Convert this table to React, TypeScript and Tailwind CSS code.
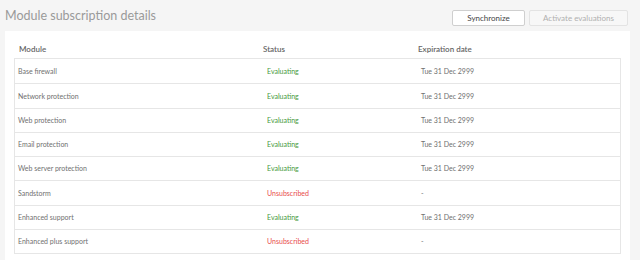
import React from "react";

const rows: { name: string; status: "Evaluating" | "Unsubscribed"; date: string }[] = [
  { name: "Base firewall", status: "Evaluating", date: "Tue 31 Dec 2999" },
  { name: "Network protection", status: "Evaluating", date: "Tue 31 Dec 2999" },
  { name: "Web protection", status: "Evaluating", date: "Tue 31 Dec 2999" },
  { name: "Email protection", status: "Evaluating", date: "Tue 31 Dec 2999" },
  { name: "Web server protection", status: "Evaluating", date: "Tue 31 Dec 2999" },
  { name: "Sandstorm", status: "Unsubscribed", date: "-" },
  { name: "Enhanced support", status: "Evaluating", date: "Tue 31 Dec 2999" },
  { name: "Enhanced plus support", status: "Unsubscribed", date: "-" },
];

export default function App() {
  return (
    <div
      className="w-[640px] h-[260px] overflow-hidden bg-[#f5f5f5] flex flex-col"
      style={{ fontFamily: "Lato, 'Open Sans', sans-serif" }}
    >
      <div className="h-[31px] flex items-start shrink-0">
        <div className="pl-[5px] pt-[8px] text-[12.5px] leading-[16px] text-[#9a9a9a] flex-1">
          Module subscription details
        </div>
        <div className="flex gap-[4px] pt-[10px] pr-[12px]">
          <button className="w-[73px] h-[16px] bg-white border border-[#cfcfcf] rounded-[2px] text-[8px] leading-[14px] text-[#444]">
            Synchronize
          </button>
          <button className="w-[99px] h-[16px] bg-[#f7f7f7] border border-[#e3e3e3] rounded-[2px] text-[8px] leading-[14px] text-[#b0b0b0]">
            Activate evaluations
          </button>
        </div>
      </div>
      <div className="ml-[5px] mr-[10px] flex-1 bg-white px-[9px]">
        <div className="h-[28px] grid grid-cols-[248px_155px_1fr] items-center text-[8px] font-semibold text-[#666]">
          <div className="pl-[5px] pt-[7px]">Module</div>
          <div className="pl-[1px] pt-[7px]">Status</div>
          <div className="pl-[1px] pt-[7px]">Expiration date</div>
        </div>
        <div className="border border-[#e6e6e6] -mt-[1px]">
          {rows.map((r, i) => (
            <div
              key={r.name}
              className={
                "h-[24.25px] grid grid-cols-[248px_155px_1fr] items-center text-[7px] " +
                (i > 0 ? "border-t border-[#e6e6e6]" : "")
              }
            >
              <div className="pl-[3px] text-[#707070]">{r.name}</div>
              <div
                className={
                  "pl-[4px] " +
                  (r.status === "Evaluating" ? "text-[#46993c]" : "text-[#e84b4b]")
                }
              >
                {r.status}
              </div>
              <div className="pl-[3px] text-[#707070]">{r.date}</div>
            </div>
          ))}
        </div>
      </div>
    </div>
  );
}
